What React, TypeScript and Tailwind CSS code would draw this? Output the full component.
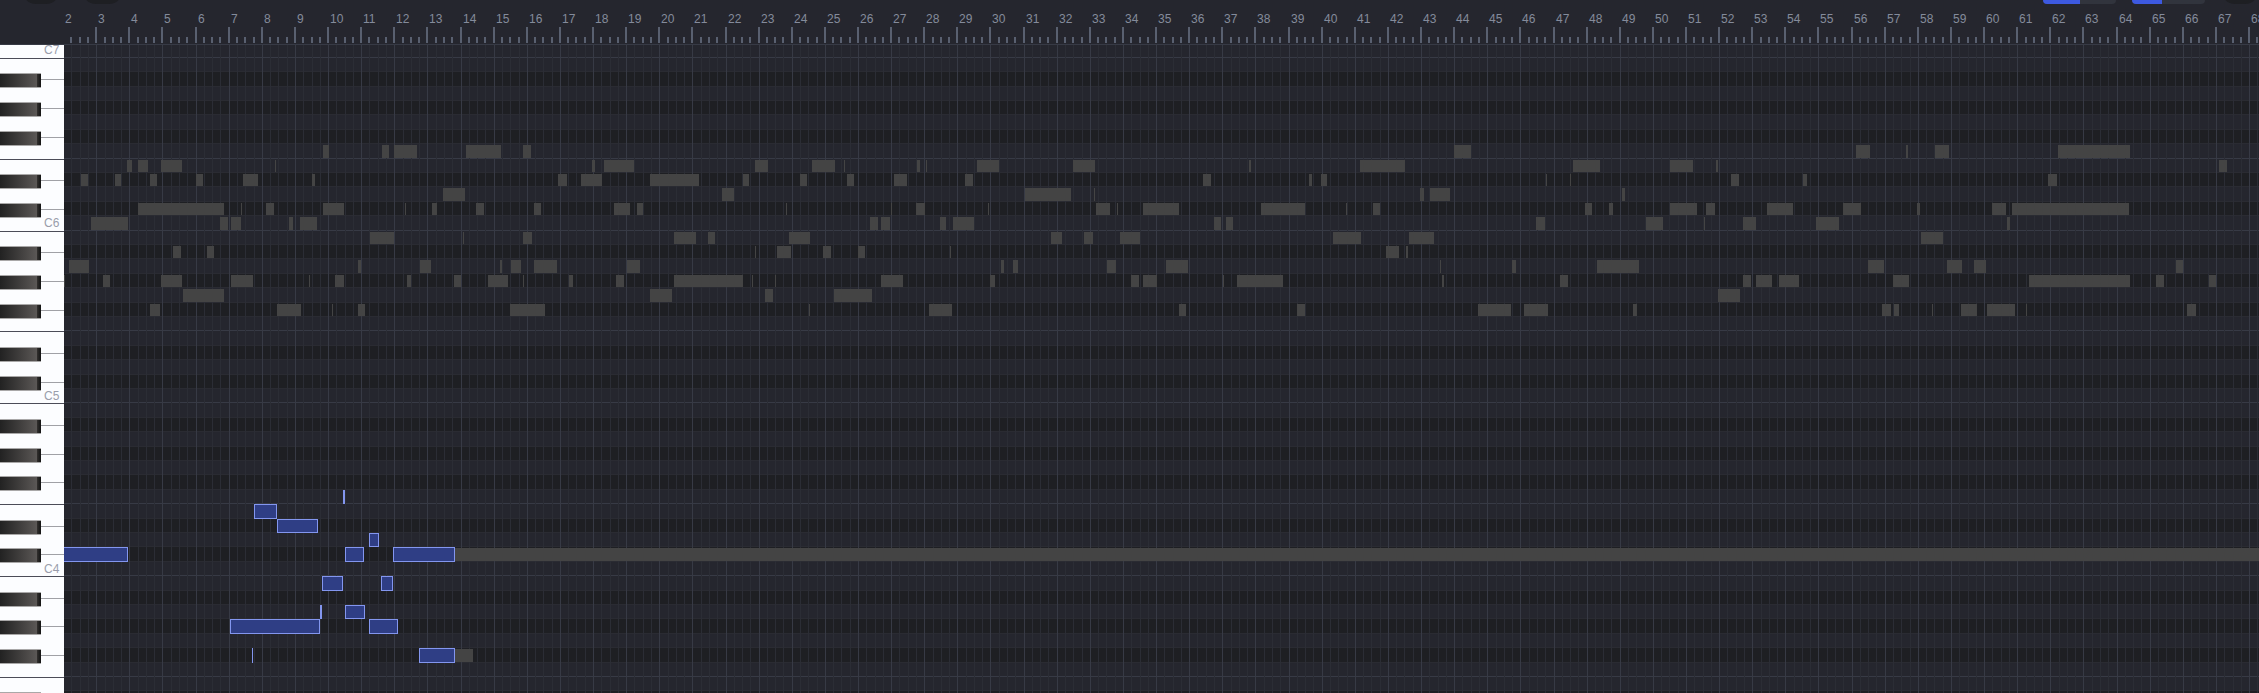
const BAR = 33.1207;
const ROW = 14.4;
const TOP = 45;
const LEFT = 64;

const beatX = (bar: number) => Math.floor(96.72 + (bar - 3) * BAR);
const rowY = (row: number) => Math.floor(57.3 + row * ROW);
const rowHeight = (row: number) => rowY(row + 1) - rowY(row);

// Start and end positions of the background notes, grouped by pitch row.
const ghostNotes: Record<number, number[][]> = {
  6: [[323, 329], [382, 389], [394, 417], [466, 501], [523, 531], [1454, 1471], [1856, 1870], [1906, 1908], [1935, 1949], [2058, 2130]],
  7: [[127, 132], [138, 148], [161, 182], [275, 276], [592, 595], [604, 634], [755, 768], [812, 835], [844, 845], [917, 920], [926, 927], [977, 999], [1073, 1095], [1249, 1251], [1360, 1405], [1573, 1600], [1670, 1693], [1716, 1718], [2219, 2227]],
  8: [[81, 88], [115, 121], [150, 157], [196, 203], [243, 258], [312, 315], [558, 567], [581, 602], [650, 699], [743, 749], [800, 807], [847, 854], [894, 907], [965, 973], [1203, 1211], [1309, 1312], [1321, 1327], [1546, 1547], [1570, 1571], [1731, 1739], [1803, 1807], [2048, 2057]],
  9: [[443, 465], [722, 734], [1025, 1071], [1094, 1095], [1420, 1424], [1430, 1450], [1622, 1625]],
  10: [[138, 224], [241, 242], [266, 274], [323, 344], [405, 406], [432, 437], [476, 484], [534, 541], [614, 630], [637, 643], [786, 787], [891, 892], [916, 925], [988, 989], [1096, 1110], [1117, 1118], [1143, 1179], [1261, 1305], [1346, 1347], [1373, 1380], [1585, 1592], [1609, 1613], [1670, 1697], [1706, 1715], [1767, 1793], [1843, 1861], [1917, 1920], [1992, 2006], [2012, 2129]],
  11: [[91, 128], [220, 228], [231, 241], [289, 293], [300, 317], [870, 878], [881, 890], [940, 946], [953, 974], [1214, 1221], [1226, 1233], [1536, 1545], [1646, 1663], [1704, 1705], [1743, 1756], [1816, 1839], [2007, 2010]],
  12: [[370, 394], [463, 464], [523, 532], [674, 696], [708, 715], [789, 810], [1051, 1062], [1084, 1093], [1120, 1140], [1333, 1361], [1409, 1434], [1921, 1943]],
  13: [[173, 181], [207, 214], [755, 756], [777, 791], [823, 831], [858, 865], [950, 951], [1386, 1399], [1406, 1408]],
  14: [[69, 89], [358, 361], [420, 431], [500, 502], [511, 521], [534, 557], [627, 640], [1001, 1004], [1013, 1018], [1107, 1116], [1166, 1188], [1440, 1441], [1512, 1516], [1597, 1639], [1868, 1884], [1947, 1962], [1974, 1986], [2176, 2183]],
  15: [[64, 65], [103, 110], [161, 182], [231, 253], [309, 310], [335, 344], [407, 411], [454, 461], [488, 508], [523, 524], [569, 573], [616, 624], [674, 743], [752, 753], [775, 776], [881, 903], [990, 995], [1131, 1139], [1143, 1157], [1223, 1224], [1237, 1283], [1442, 1444], [1560, 1568], [1743, 1751], [1756, 1772], [1779, 1799], [1893, 1909], [2029, 2130], [2156, 2164], [2209, 2216]],
  16: [[183, 224], [650, 672], [765, 773], [834, 872], [1718, 1740]],
  17: [[150, 160], [277, 301], [332, 333], [358, 365], [510, 545], [809, 810], [929, 952], [1179, 1186], [1297, 1305], [1478, 1511], [1524, 1548], [1633, 1637], [1882, 1891], [1894, 1899], [1932, 1933], [1961, 1977], [1987, 2015], [2026, 2027], [2187, 2196]],
  34: [[455, 2259]],
  41: [[455, 473]],
};

const activeNotes: Record<number, number[][]> = {
  30: [[343, 345]],
  31: [[254, 277]],
  32: [[277, 318]],
  33: [[369, 379]],
  34: [[60, 128], [345, 364], [393, 455]],
  36: [[322, 343], [381, 393]],
  38: [[320, 322], [345, 365]],
  39: [[230, 320], [369, 398]],
  41: [[252, 253], [419, 455]],
};

const rows = Array.from({ length: 46 }, (_, i) => i - 1);
const pitch = (row: number) => ((row % 12) + 12) % 12;
const isBlack = (row: number) => [1, 3, 5, 8, 10].includes(pitch(row));
const isStrong = (row: number) => pitch(row) === 0 || pitch(row) === 7;
const beats = Array.from({ length: 265 }, (_, i) => 2.25 + i / 4);
const bars = Array.from({ length: 67 }, (_, i) => i + 2);

function Toolbar() {
  return (
    <div className="flex h-1 w-full shrink-0 items-end overflow-hidden">
      <div className="ml-[22px] h-7 w-[38px] rounded-[14px] bg-[#1e1f23]" />
      <div className="ml-[22px] h-7 w-[41px] rounded-[14px] bg-[#1e1f23]" />
      <div className="ml-[1920px] flex h-5 w-[74px] overflow-hidden rounded bg-[#31343d]">
        <div className="w-[37px] bg-[#3d59e0]" />
      </div>
      <div className="ml-4 flex h-5 w-[73px] overflow-hidden rounded bg-[#31343d]">
        <div className="w-[30px] bg-[#3d59e0]" />
      </div>
      <div className="ml-4 h-7 w-[38px] shrink-0 rounded-[14px] bg-[#1e1f23]" />
    </div>
  );
}

function Ruler() {
  return (
    <div className="flex h-10 w-full shrink-0 flex-col overflow-hidden">
      <div className="flex h-[23px] pt-[7px] pl-[63px]">
        {bars.map((b) => (
          <span
            key={b}
            className="shrink-0 pl-0.5 text-[12px] leading-4 text-[#848b9b]"
            style={{ width: beatX(b + 1) - beatX(b) }}
          >
            {b}
          </span>
        ))}
      </div>
      <div className="flex h-4 items-end pl-[70px]">
        {beats.map((b) => (
          <div
            key={b}
            className={
              b % 1 === 0
                ? "flex h-4 shrink-0"
                : "flex h-1.5 shrink-0"
            }
            style={{ width: beatX(b + 0.25) - beatX(b) }}
          >
            <div className="w-0.5 bg-[#596070]" />
          </div>
        ))}
      </div>
    </div>
  );
}

function BlackKey({ row }: { row: number }) {
  return (
    <div className="flex shrink-0" style={{ height: rowHeight(row) }}>
      <div className="flex h-[15px] w-[41px] justify-end border-y border-[#a9a8a8] bg-linear-to-r from-[#222222] to-[#625e5c]">
        <div className="w-1 bg-linear-to-r from-[#33312f] to-[#131313]" />
      </div>
      <div className="mt-1.5 h-px flex-1 bg-[#a0a1a6]" />
    </div>
  );
}

function WhiteKey({ row }: { row: number }) {
  return (
    <div
      className={isStrong(row + 1) ? "shrink-0 border-b border-[#4b4c58] pl-11" : "shrink-0 pl-11"}
      style={{ height: rowHeight(row) }}
    >
      {pitch(row) === 11 && (
        <span className="block text-[12px] leading-[12px] text-[#9a9dab]">C{7 - (row + 1) / 12}</span>
      )}
    </div>
  );
}

function Keyboard() {
  return (
    <div className="w-16 shrink-0 overflow-hidden bg-[#fcfdff]">
      <div className="-mt-px flex flex-col">
        {rows.map((r) => (isBlack(r) ? <BlackKey key={r} row={r} /> : <WhiteKey key={r} row={r} />))}
      </div>
    </div>
  );
}

function NoteGrid() {
  return (
    <div className="relative min-w-0 flex-1 overflow-hidden bg-[#25262e]">
      <div className="-mt-[3px] flex flex-col">
        {rows.map((r) => (
          <div
            key={r}
            className={
              isBlack(r)
                ? "shrink-0 border-t border-[#2a2b32] bg-[#1e1f23]"
                : isStrong(r)
                  ? "shrink-0 border-t border-[#373a45]"
                  : "shrink-0 border-t border-[#2a2b32]"
            }
            style={{ height: rowHeight(r) }}
          />
        ))}
      </div>
      <div className="absolute inset-0 flex pl-[7px]">
        {beats.map((b) => (
          <div
            key={b}
            className={b % 1 === 0 ? "shrink-0 border-l border-[#373a45]" : "shrink-0 border-l border-[#2b2d35]"}
            style={{ width: beatX(b + 0.25) - beatX(b) }}
          />
        ))}
      </div>
      {Object.entries(ghostNotes).flatMap(([row, notes]) =>
        notes.map(([start, end]) => (
          <div
            key={`${row}-${start}`}
            className="absolute bg-[#444444]"
            style={{ left: start - LEFT, width: end - start, top: rowY(+row) + 2 - TOP, height: rowHeight(+row) - 2 }}
          />
        )),
      )}
      {Object.entries(activeNotes).flatMap(([row, notes]) =>
        notes.map(([start, end]) => (
          <div
            key={`${row}-${start}`}
            className={end - start < 3 ? "absolute bg-[#8396ef]" : "absolute border border-[#8396ef] bg-[#2f3e85]"}
            style={{ left: start - LEFT, width: end - start, top: rowY(+row) + 1 - TOP, height: rowHeight(+row) }}
          />
        )),
      )}
    </div>
  );
}

export default function App() {
  return (
    <div className="flex h-[693px] w-full flex-col overflow-hidden bg-[#25262e] font-['Liberation_Sans',sans-serif]">
      <Toolbar />
      <Ruler />
      <div className="h-px w-full shrink-0 bg-[#373a45]" />
      <div className="flex min-h-0 flex-1">
        <Keyboard />
        <NoteGrid />
      </div>
    </div>
  );
}
